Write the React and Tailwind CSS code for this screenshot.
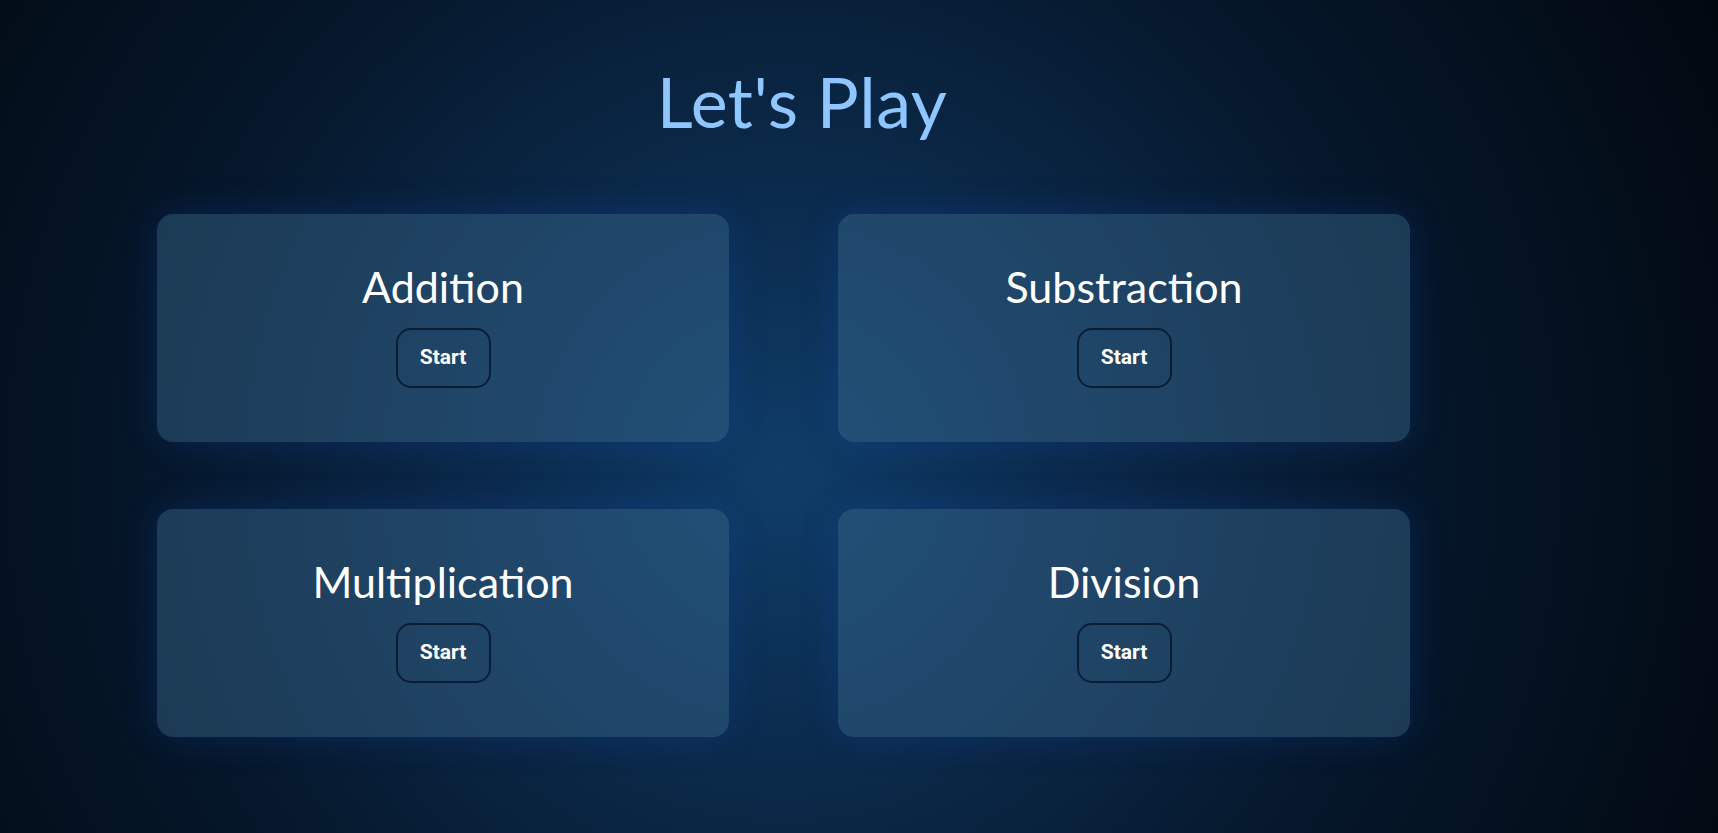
export default function App() {
  const games = ["Addition", "Substraction", "Multiplication", "Division"];

  return (
    <div className="min-h-screen w-full bg-[radial-gradient(circle_at_783px_471px,#0f3d68_0%,#0b2a4b_28%,#06182c_58%,#020810_100%)] font-['Lato',sans-serif]">
      <div className="pl-[157px] pt-[58px] w-[1447px] flex flex-col">
        <h1 className="self-center text-[70px] leading-[86px] text-[#8fc6ff] tracking-[0.5px]">
          Let's Play
        </h1>

        <div className="mt-[70px] grid grid-cols-[572px_572px] gap-x-[109px] gap-y-[67px]">
          {games.map((name) => (
            <div
              key={name}
              className="h-[228px] rounded-2xl bg-[rgba(61,109,146,0.43)] shadow-[0_0_36px_rgba(29,78,216,0.22)] flex flex-col items-center pt-[45px]"
            >
              <h2 className="text-[43px] leading-[56px] text-white">{name}</h2>
              <button className="mt-[13px] w-[95px] h-[60px] rounded-[15px] border-2 border-[#0b1d36] text-white text-[21px] font-bold font-['Roboto',sans-serif]">
                Start
              </button>
            </div>
          ))}
        </div>
      </div>
    </div>
  );
}
